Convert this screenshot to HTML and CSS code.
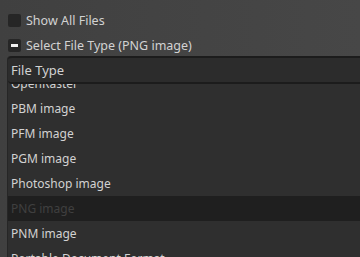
FILE: index.html
```html
<!DOCTYPE html>
<html lang="en">
<head>
  <meta charset="UTF-8" />
  <title>File Type</title>
  <link rel="stylesheet" href="styles.css">
</head>
<body>
  <div class="options">
    <label class="check">
      <span class="box"></span>
      Show All Files
    </label>
    <label class="check">
      <span class="box mixed"></span>
      Select File Type (PNG image)
    </label>
  </div>

  <div class="view">
    <div class="header">File Type</div>
    <div class="rows">
      <ul class="list">
        <li>OpenRaster</li>
        <li>PBM image</li>
        <li>PFM image</li>
        <li>PGM image</li>
        <li>Photoshop image</li>
        <li class="selected">PNG image</li>
        <li>PNM image</li>
        <li>Portable Document Format</li>
      </ul>
    </div>
  </div>
</body>
</html>
```

FILE: styles.css
```css
* {
  box-sizing: border-box;
}

html, body {
  height: 100%;
}

body {
  margin: 0;
  font-family: "Noto Sans", "Open Sans", sans-serif;
  font-size: 12px;
  color: #d2d2d2;
  background: linear-gradient(90deg, #404040, #474747);
  display: flex;
  flex-direction: column;
  overflow: hidden;
}

.options {
  padding: 8px 8px 0;
  height: 56px;
  font-size: 12.5px;
}

.check {
  display: flex;
  align-items: center;
  gap: 5px;
  height: 25px;
}

.box {
  width: 13px;
  height: 13px;
  border-radius: 2px;
  background: #262626;
  display: flex;
  align-items: center;
  justify-content: center;
}

.box.mixed::after {
  content: "";
  width: 7px;
  height: 3px;
  background: #f0f0f0;
}

.view {
  flex: 1;
  margin-left: 7px;
  background: #2f2f2f;
  border-left: 1px solid #262626;
  border-top-left-radius: 4px;
  display: flex;
  flex-direction: column;
  min-height: 0;
}

.header {
  height: 28px;
  padding: 0 3px;
  display: flex;
  align-items: center;
  font-size: 13px;
  background: #2c2c2c;
  border-top: 2px solid #1c1c1c;
  border-bottom: 2px solid #1c1c1c;
  border-top-left-radius: 4px;
  border-bottom-left-radius: 4px;
}

.rows {
  flex: 1;
  overflow: hidden;
}

.list {
  list-style: none;
  margin: -13px 0 0;
  padding: 0;
}

.list li {
  height: 25px;
  line-height: 25px;
  padding-left: 3px;
}

.list li.selected {
  background: #1f1f1f;
  color: #3f3f3f;
}
```
